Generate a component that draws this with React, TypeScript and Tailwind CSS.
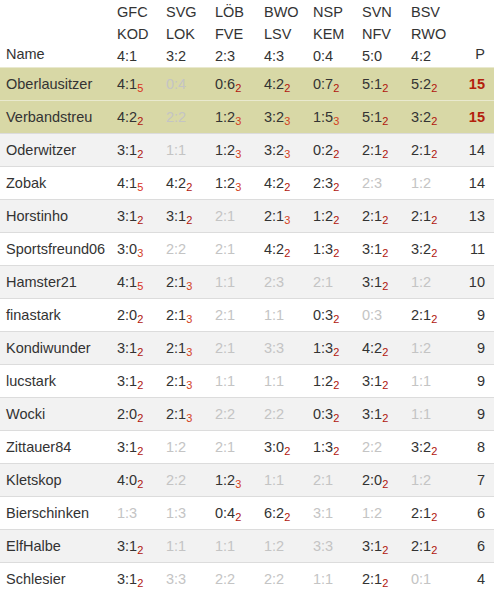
const teams = [
  ['GFC', 'KOD', '4:1'],
  ['SVG', 'LOK', '3:2'],
  ['LÖB', 'FVE', '2:3'],
  ['BWO', 'LSV', '4:3'],
  ['NSP', 'KEM', '0:4'],
  ['SVN', 'NFV', '5:0'],
  ['BSV', 'RWO', '4:2'],
];

// "4:1/5" = tipp mit punkten, "0:4" ohne = grau
type Row = { name: string; tips: string[]; points: number; top?: boolean };

const rows: Row[] = [
  { name: 'Oberlausitzer', tips: ['4:1/5', '0:4', '0:6/2', '4:2/2', '0:7/2', '5:1/2', '5:2/2'], points: 15, top: true },
  { name: 'Verbandstreu', tips: ['4:2/2', '2:2', '1:2/3', '3:2/3', '1:5/3', '5:1/2', '3:2/2'], points: 15, top: true },
  { name: 'Oderwitzer', tips: ['3:1/2', '1:1', '1:2/3', '3:2/3', '0:2/2', '2:1/2', '2:1/2'], points: 14 },
  { name: 'Zobak', tips: ['4:1/5', '4:2/2', '1:2/3', '4:2/2', '2:3/2', '2:3', '1:2'], points: 14 },
  { name: 'Horstinho', tips: ['3:1/2', '3:1/2', '2:1', '2:1/3', '1:2/2', '2:1/2', '2:1/2'], points: 13 },
  { name: 'Sportsfreund06', tips: ['3:0/3', '2:2', '2:1', '4:2/2', '1:3/2', '3:1/2', '3:2/2'], points: 11 },
  { name: 'Hamster21', tips: ['4:1/5', '2:1/3', '1:1', '2:3', '2:1', '3:1/2', '1:2'], points: 10 },
  { name: 'finastark', tips: ['2:0/2', '2:1/3', '2:1', '1:1', '0:3/2', '0:3', '2:1/2'], points: 9 },
  { name: 'Kondiwunder', tips: ['3:1/2', '2:1/3', '2:1', '3:3', '1:3/2', '4:2/2', '1:2'], points: 9 },
  { name: 'lucstark', tips: ['3:1/2', '2:1/3', '1:1', '1:1', '1:2/2', '3:1/2', '1:1'], points: 9 },
  { name: 'Wocki', tips: ['2:0/2', '2:1/3', '2:2', '2:2', '0:3/2', '3:1/2', '1:1'], points: 9 },
  { name: 'Zittauer84', tips: ['3:1/2', '1:2', '2:1', '3:0/2', '1:3/2', '2:2', '3:2/2'], points: 8 },
  { name: 'Kletskop', tips: ['4:0/2', '2:2', '1:2/3', '1:1', '2:1', '2:0/2', '1:2'], points: 7 },
  { name: 'Bierschinken', tips: ['1:3', '1:3', '0:4/2', '6:2/2', '3:1', '1:2', '2:1/2'], points: 6 },
  { name: 'ElfHalbe', tips: ['3:1/2', '1:1', '1:1', '1:2', '3:3', '3:1/2', '2:1/2'], points: 6 },
  { name: 'Schlesier', tips: ['3:1/2', '3:3', '2:2', '2:2', '1:1', '2:1/2', '0:1'], points: 4 },
];

const subColor: Record<string, string> = {
  '2': 'text-[#b0140f]',
  '3': 'text-[#d2401f]',
  '5': 'text-[#d8301c]',
};

function Tip({ value }: { value: string }) {
  const [score, pts] = value.split('/');
  if (!pts) return <span className="text-[#c4c4c4]">{score}</span>;
  return (
    <span className="text-[#333]">
      {score}
      <sub className={`text-[11px] ${subColor[pts]}`}>{pts}</sub>
    </span>
  );
}

export default function App() {
  return (
    <div className="w-[494px] h-[591px] overflow-hidden bg-white text-[#333] text-[14.5px]" style={{ fontFamily: '"Liberation Sans", Arial, sans-serif' }}>
      {/* Header */}
      <div className="flex h-[67px] leading-[22px] pt-px">
        <div className="w-[111px] pl-1.5 flex flex-col justify-end pb-0.5">Name</div>
        {teams.map((t, i) => (
          <div key={i} className="w-[49px] pl-1.5 flex flex-col pb-0.5">
            <span>{t[0]}</span>
            <span>{t[1]}</span>
            <span>{t[2]}</span>
          </div>
        ))}
        <div className="flex-1 pr-[9px] flex flex-col justify-end items-end pb-0.5">P</div>
      </div>

      {/* Rows */}
      {rows.map((r, i) => {
        const bg = r.top ? 'bg-[#d8d8a6]' : i % 2 === 0 ? 'bg-[#f2f2f2]' : 'bg-white';
        const border = r.top ? 'border-[#e9e9cf]' : 'border-[#dcdcdc]';
        return (
          <div key={r.name} className={`flex h-[33px] items-center pt-[2px] border-t ${border} ${bg}`}>
            <div className="w-[111px] pl-1.5 whitespace-nowrap">{r.name}</div>
            {r.tips.map((t, j) => (
              <div key={j} className="w-[49px] pl-1.5 whitespace-nowrap">
                <Tip value={t} />
              </div>
            ))}
            <div className={`flex-1 pr-[9px] text-right ${r.top ? 'font-bold text-[#b3200c]' : ''}`}>{r.points}</div>
          </div>
        );
      })}
    </div>
  );
}
